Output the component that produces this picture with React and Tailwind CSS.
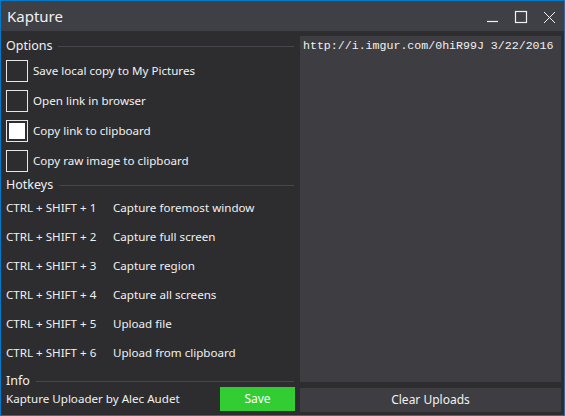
import { useState } from 'react'

const OPTIONS = [
  { key: 'save', label: 'Save local copy to My Pictures', checked: false },
  { key: 'open', label: 'Open link in browser', checked: false },
  { key: 'copy', label: 'Copy link to clipboard', checked: true },
  { key: 'raw', label: 'Copy raw image to clipboard', checked: false },
]

const HOTKEYS = [
  ['CTRL + SHIFT + 1', 'Capture foremost window'],
  ['CTRL + SHIFT + 2', 'Capture full screen'],
  ['CTRL + SHIFT + 3', 'Capture region'],
  ['CTRL + SHIFT + 4', 'Capture all screens'],
  ['CTRL + SHIFT + 5', 'Upload file'],
  ['CTRL + SHIFT + 6', 'Upload from clipboard'],
]

function Section({ title, className = '' }) {
  return (
    <div className={`flex items-center gap-[6px] pr-[1px] ${className}`}>
      <span className="text-[12.5px] leading-none text-[#f1f1f1]">{title}</span>
      <div className="h-px flex-1 bg-[#46464c]" />
    </div>
  )
}

function Check({ label, checked, onToggle }) {
  return (
    <button onClick={onToggle} className="flex items-center gap-[5px] h-[22px] text-left">
      <span className="w-[22px] h-[22px] border border-[#e6e6e6] p-[2px] shrink-0">
        {checked && <span className="block w-full h-full bg-white" />}
      </span>
      <span className="text-[11.6px] leading-none pb-[1px] text-[#f1f1f1]">{label}</span>
    </button>
  )
}

export default function App() {
  const [opts, setOpts] = useState(OPTIONS)
  const toggle = key => setOpts(o => o.map(x => (x.key === key ? { ...x, checked: !x.checked } : x)))

  return (
    <div
      className="w-[565px] h-[416px] border border-[#007acc] bg-[#2d2d30] flex flex-col text-[#f1f1f1]"
      style={{ fontFamily: '"Noto Sans", "Open Sans", sans-serif' }}
    >
      {/* Title bar */}
      <div className="h-[30px] bg-[#3f3f46] flex items-center pl-[6px] shrink-0">
        <span className="text-[15px] flex-1">Kapture</span>
        <svg width="80" height="30" viewBox="0 0 80 30" fill="none" stroke="#f1f1f1">
          <path d="M3 20.5h11" strokeWidth="1.2" />
          <rect x="31.5" y="10.5" width="11" height="11" strokeWidth="1.2" />
          <path d="M60 11l11 11M71 11L60 22" strokeWidth="1" />
        </svg>
      </div>

      {/* Body */}
      <div className="flex flex-1 pt-[5px] pb-[3px] pr-[3px] gap-[5px] min-h-0">
        {/* Left column */}
        <div className="w-[294px] pl-[5px] flex flex-col">
          <Section title="Options" className="h-[20px] shrink-0" />
          <div className="flex flex-col gap-[8px] mt-[4px]">
            {opts.map(o => (
              <Check key={o.key} label={o.label} checked={o.checked} onToggle={() => toggle(o.key)} />
            ))}
          </div>
          <Section title="Hotkeys" className="h-[16px] mt-[5px] shrink-0" />
          <div className="flex flex-col">
            {HOTKEYS.map(([k, a]) => (
              <div key={k} className="h-[29px] flex items-center text-[11.6px]">
                <span className="w-[107px] shrink-0">{k}</span>
                <span>{a}</span>
              </div>
            ))}
          </div>
          <Section title="Info" className="h-[12px] mt-[8px] shrink-0" />
          <div className="flex items-center h-[24px] shrink-0">
            <span className="text-[11.6px] flex-1">Kapture Uploader by Alec Audet</span>
            <button className="w-[75px] h-[24px] bg-[#32cd32] text-[12px] text-white">Save</button>
          </div>
        </div>

        {/* Right column */}
        <div className="flex-1 flex flex-col gap-[6px]">
          <div
            className="flex-1 bg-[#3e3e42] pl-[3px] pt-[1px] text-[11.6px] text-[#f1f1f1]"
            style={{ fontFamily: '"Liberation Mono", "Courier New", monospace' }}
          >
            http://i.imgur.com/0hiR99J 3/22/2016
          </div>
          <button className="h-[24px] shrink-0 bg-[#3e3e42] text-[12px] text-[#f1f1f1]">Clear Uploads</button>
        </div>
      </div>
    </div>
  )
}
